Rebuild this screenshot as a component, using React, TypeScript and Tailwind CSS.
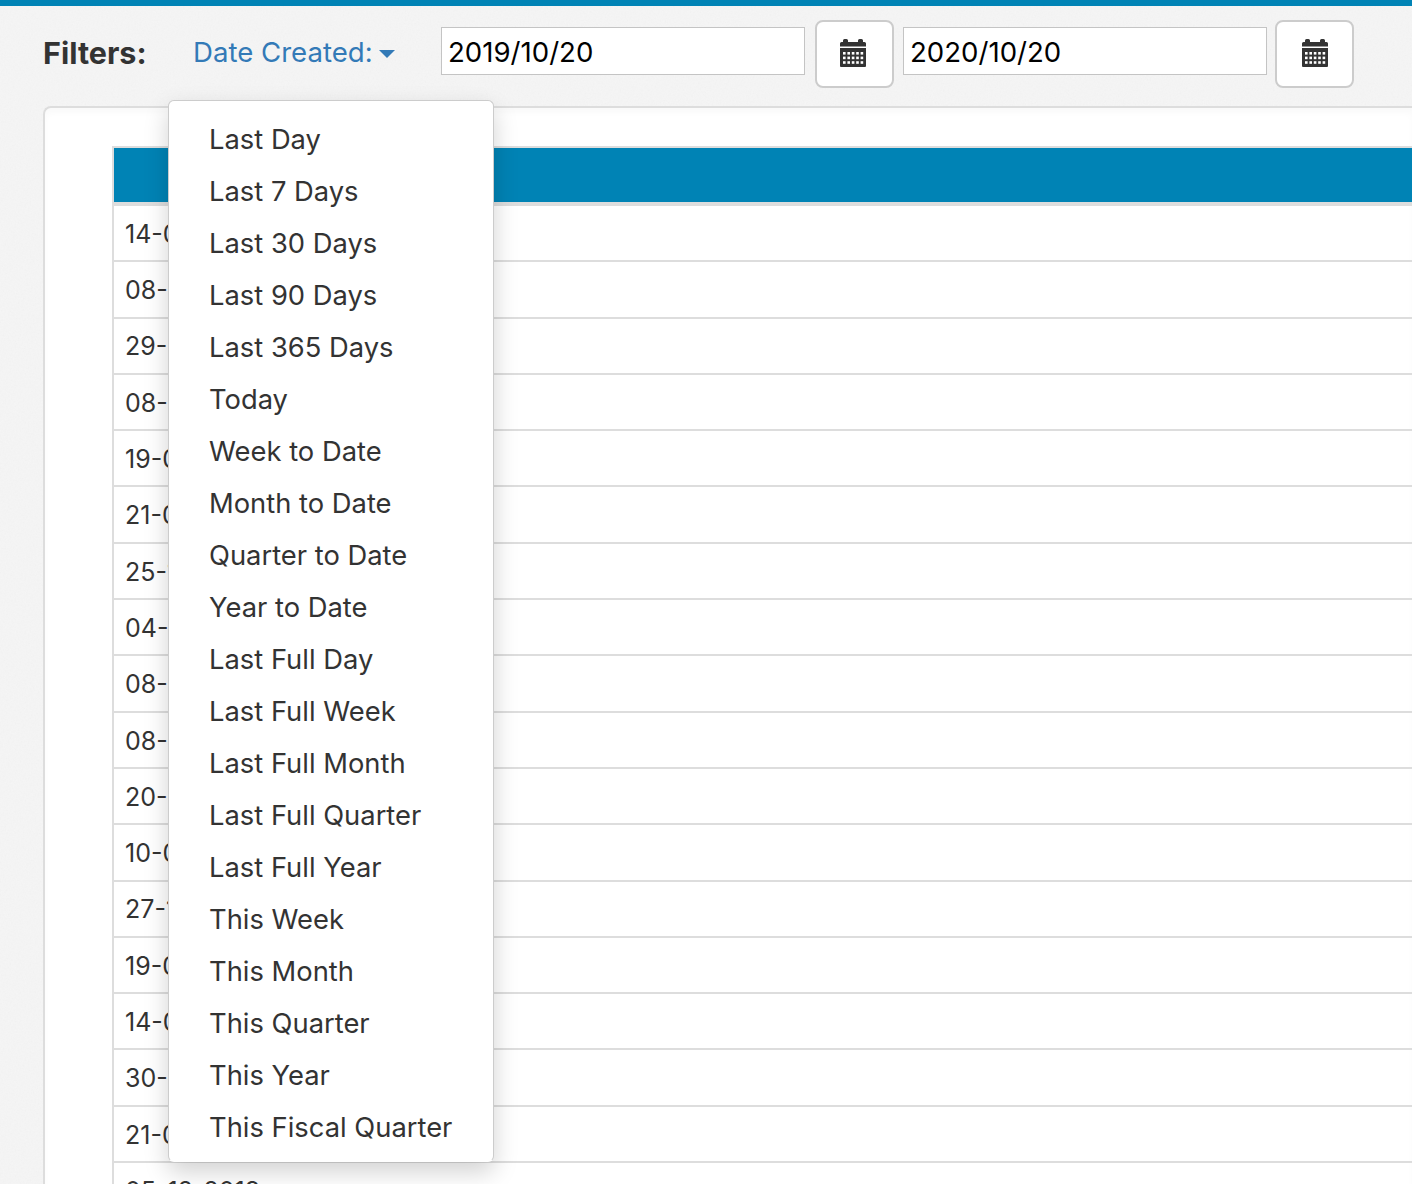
const menuItems = [
  "Last Day",
  "Last 7 Days",
  "Last 30 Days",
  "Last 90 Days",
  "Last 365 Days",
  "Today",
  "Week to Date",
  "Month to Date",
  "Quarter to Date",
  "Year to Date",
  "Last Full Day",
  "Last Full Week",
  "Last Full Month",
  "Last Full Quarter",
  "Last Full Year",
  "This Week",
  "This Month",
  "This Quarter",
  "This Year",
  "This Fiscal Quarter",
];

const rows = [
  "14-08-2019",
  "08-01-2020",
  "29-08-2020",
  "08-04-2020",
  "19-03-2020",
  "21-05-2020",
  "25-11-2019",
  "04-02-2020",
  "08-06-2020",
  "08-07-2020",
  "20-03-2020",
  "10-02-2020",
  "27-11-2019",
  "19-06-2020",
  "14-01-2020",
  "30-11-2019",
  "21-04-2020",
  "05-12-2019",
];

function CalendarIcon({ className }: { className?: string }) {
  const dots = [];
  for (let r = 0; r < 3; r++) {
    for (let c = 0; c < 5; c++) {
      dots.push(<rect key={`${r}-${c}`} x={3 + c * 4.4} y={13 + r * 4.6} width="2.6" height="2.6" fill="#fff" />);
    }
  }
  return (
    <svg width="26" height="28" viewBox="0 0 26 28" className={className}>
      <path
        d="M0 4.5Q0 3 1.5 3H3V1.5Q3 0 4.5 0H6.5Q8 0 8 1.5V3H18V1.5Q18 0 19.5 0H21.5Q23 0 23 1.5V3H24.5Q26 3 26 4.5V7.5H0Z"
        fill="#333"
      />
      <path d="M0 9H26V27Q26 28 25 28H1Q0 28 0 27Z" fill="#333" />
      {dots}
    </svg>
  );
}

function DateField({ value }: { value: string }) {
  return (
    <div className="mt-[7px] flex h-[48px] w-[364px] items-center border border-[#c4c4c4] bg-white pl-[6px] pt-[3px] text-[27.6px] text-black">
      {value}
    </div>
  );
}

export default function App() {
  return (
    <div className="relative h-[1184px] w-[1412px] overflow-hidden bg-[#f5f5f5] font-['Inter',sans-serif] text-[#333]">
      {/* paper texture behind the page */}
      <svg className="absolute inset-0 opacity-[0.05]" width="1412" height="1184">
        <filter id="paper">
          <feTurbulence type="fractalNoise" baseFrequency="0.6" numOctaves="2" />
          <feColorMatrix type="saturate" values="0" />
        </filter>
        <rect width="1412" height="1184" filter="url(#paper)" />
      </svg>

      <div className="relative">
        <div className="h-[6px] bg-[#0083b5]" />

        <div className="flex h-[100px] items-start pt-[14px]">
          <span className="ml-[43px] mt-[13px] w-[150px] text-[30.5px] leading-[40px] font-bold">Filters:</span>
          <button className="mt-[12px] flex w-[248px] items-center text-[27.6px] leading-[40px] text-[#337ab7]">
            Date Created:
            <span className="ml-[6px] mt-[3px] h-0 w-0 border-x-[8px] border-t-[8px] border-x-transparent border-t-[#337ab7]" />
          </button>
          <DateField value="2019/10/20" />
          <button className="ml-[10px] flex h-[68px] w-[79px] items-center justify-center rounded-[8px] border-2 border-[#ccc] bg-white">
            <CalendarIcon className="mb-[3px] mr-[4px]" />
          </button>
          <div className="ml-[9px]">
            <DateField value="2020/10/20" />
          </div>
          <button className="ml-[8px] flex h-[68px] w-[79px] items-center justify-center rounded-[8px] border-2 border-[#ccc] bg-white">
            <CalendarIcon className="mb-[3px]" />
          </button>
        </div>

        <div className="ml-[43px] h-[1100px] rounded-tl-[8px] border-2 border-r-0 border-[#ddd] bg-white pl-[67px] pt-[38px] shadow-[inset_0_5px_6px_rgba(0,0,0,0.025)]">
          <div className="border-l-2 border-t-2 border-[#ddd] text-[25px]">
            <div className="h-[54px] bg-[#0083b5]" />
            <div className="h-[4px] bg-[#ddd]" />
            {rows.map((date) => (
              <div key={date} className="flex h-[56.3px] items-center border-b-2 border-[#ddd] pl-[11px] pt-[3px]">
                {date}
              </div>
            ))}
          </div>
        </div>
      </div>

      <ul className="absolute left-[168px] top-[100px] w-[326px] rounded-[6px] border border-[#ccc] border-b-transparent bg-white pb-[7px] pt-[13px] text-[27.35px] shadow-[0_10px_24px_rgba(0,0,0,0.18)]">
        {menuItems.map((item) => (
          <li key={item} className="flex h-[52px] items-center pl-[40px]">
            {item}
          </li>
        ))}
      </ul>
    </div>
  );
}
